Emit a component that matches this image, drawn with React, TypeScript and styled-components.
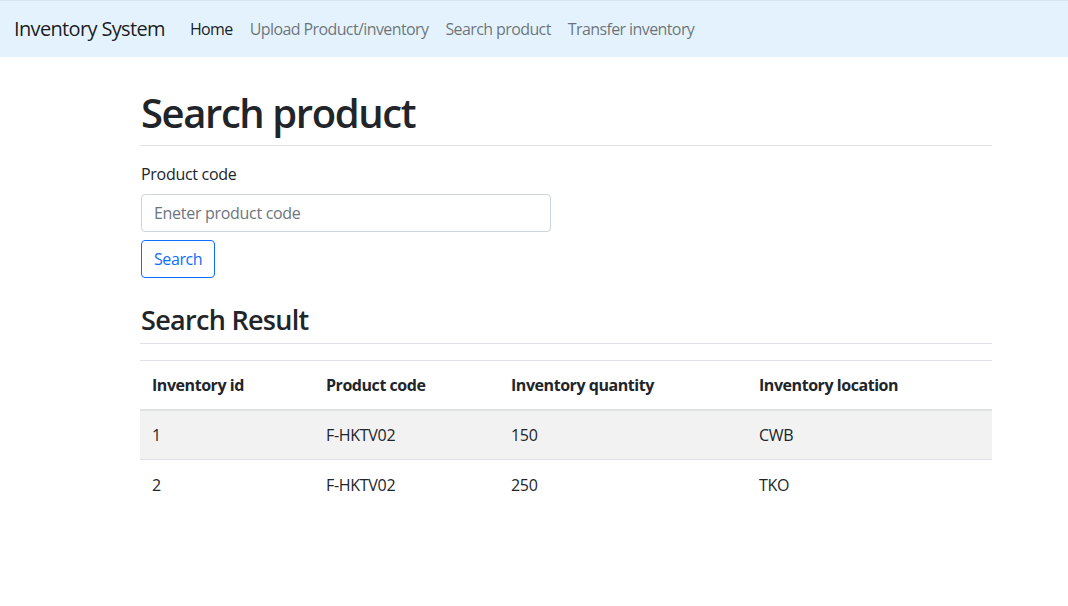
import React from 'react'
import styled, { createGlobalStyle } from 'styled-components'

const GlobalStyle = createGlobalStyle`
  * { box-sizing: border-box; }
  body {
    margin: 0;
    font-family: "Open Sans", "Noto Sans", sans-serif;
    font-size: 16px;
    line-height: 1.5;
    color: #212529;
    background: #fff;
  }
`

const Navbar = styled.nav`
  height: 57px;
  background: #e3f2fd;
  border-top: 1px solid #d5e3ee;
  display: flex;
  align-items: center;
  padding: 0 14px;
`

const Brand = styled.span`
  font-size: 20px;
  color: rgba(0, 0, 0, 0.9);
  margin-right: 25px;
  letter-spacing: -0.65px;
`

const NavLinks = styled.div`
  display: flex;
  gap: 17px;
`

const NavLink = styled.a<{ $active?: boolean }>`
  font-size: 16px;
  text-decoration: none;
  letter-spacing: -0.6px;
  color: ${ (p) => (p.$active ? 'rgba(0,0,0,0.9)' : 'rgba(0,0,0,0.55)') };
`

const Main = styled.main`
  width: 852px;
  margin-left: 140px;
  padding-top: 32px;
`

const Title = styled.h1`
  font-size: 40px;
  font-weight: 600;
  line-height: 1.2;
  margin: 0;
  padding: 0 0 8px 1px;
  border-bottom: 1px solid #dee2e6;
  letter-spacing: -1.4px;
`

const Form = styled.form`
  display: flex;
  flex-direction: column;
  align-items: flex-start;
  padding: 16px 0 0 1px;
`

const Label = styled.label`
  font-size: 16px;
  margin-bottom: 8px;
  letter-spacing: -0.3px;
`

const Input = styled.input`
  width: 410px;
  height: 38px;
  padding: 6px 12px;
  font: inherit;
  letter-spacing: -0.3px;
  border: 1px solid #ced4da;
  border-radius: 4px;
  color: #212529;
  &::placeholder { color: #6c757d; }
`

const Button = styled.button`
  margin-top: 8px;
  height: 38px;
  padding: 0 12px;
  font: inherit;
  letter-spacing: -0.4px;
  color: #0d6efd;
  background: #fff;
  border: 1px solid #0d6efd;
  border-radius: 4px;
`

const Subtitle = styled.h3`
  font-size: 27px;
  font-weight: 600;
  line-height: 1.2;
  margin: 26px 0 0;
  padding: 0 0 7px 1px;
  border-bottom: 1px solid #dee2e6;
  letter-spacing: -0.7px;
`

const Table = styled.table`
  width: 100%;
  margin-top: 16px;
  border-collapse: collapse;
  border-top: 1px solid #dee2e6;
`

const Th = styled.th<{ $w: number }>`
  width: ${ (p) => p.$w }px;
  text-align: left;
  font-weight: 700;
  padding: 12px;
  height: 48px;
  letter-spacing: -0.45px;
  border-bottom: 2px solid #dee2e6;
`

const Row = styled.tr<{ $striped?: boolean }>`
  background: ${ (p) => (p.$striped ? '#f2f2f2' : '#fff') };
  border-bottom: 1px solid #dee2e6;
  &:last-child { border-bottom: none; }
`

const Td = styled.td`
  padding: 12px;
  height: 49px;
  letter-spacing: -0.3px;
`

const rows = [
	{ id: 1, code: 'F-HKTV02', qty: 150, location: 'CWB' },
	{ id: 2, code: 'F-HKTV02', qty: 250, location: 'TKO' }
]

const App = (): React.ReactNode => (
	<>
		<GlobalStyle />
		<Navbar>
			<Brand>Inventory System</Brand>
			<NavLinks>
				<NavLink $active>Home</NavLink>
				<NavLink>Upload Product/inventory</NavLink>
				<NavLink>Search product</NavLink>
				<NavLink>Transfer inventory</NavLink>
			</NavLinks>
		</Navbar>
		<Main>
			<Title>Search product</Title>
			<Form onSubmit={(e) => e.preventDefault()}>
				<Label>Product code</Label>
				<Input placeholder='Eneter product code' />
				<Button type='submit'>Search</Button>
			</Form>
			<Subtitle>Search Result</Subtitle>
			<Table>
				<thead>
					<tr>
						<Th $w={174}>Inventory id</Th>
						<Th $w={185}>Product code</Th>
						<Th $w={248}>Inventory quantity</Th>
						<Th $w={245}>Inventory location</Th>
					</tr>
				</thead>
				<tbody>
					{rows.map((row, idx) => (
						<Row key={row.id} $striped={idx % 2 === 0}>
							<Td>{row.id}</Td>
							<Td>{row.code}</Td>
							<Td>{row.qty}</Td>
							<Td>{row.location}</Td>
						</Row>
					))}
				</tbody>
			</Table>
		</Main>
	</>
)

export default App
